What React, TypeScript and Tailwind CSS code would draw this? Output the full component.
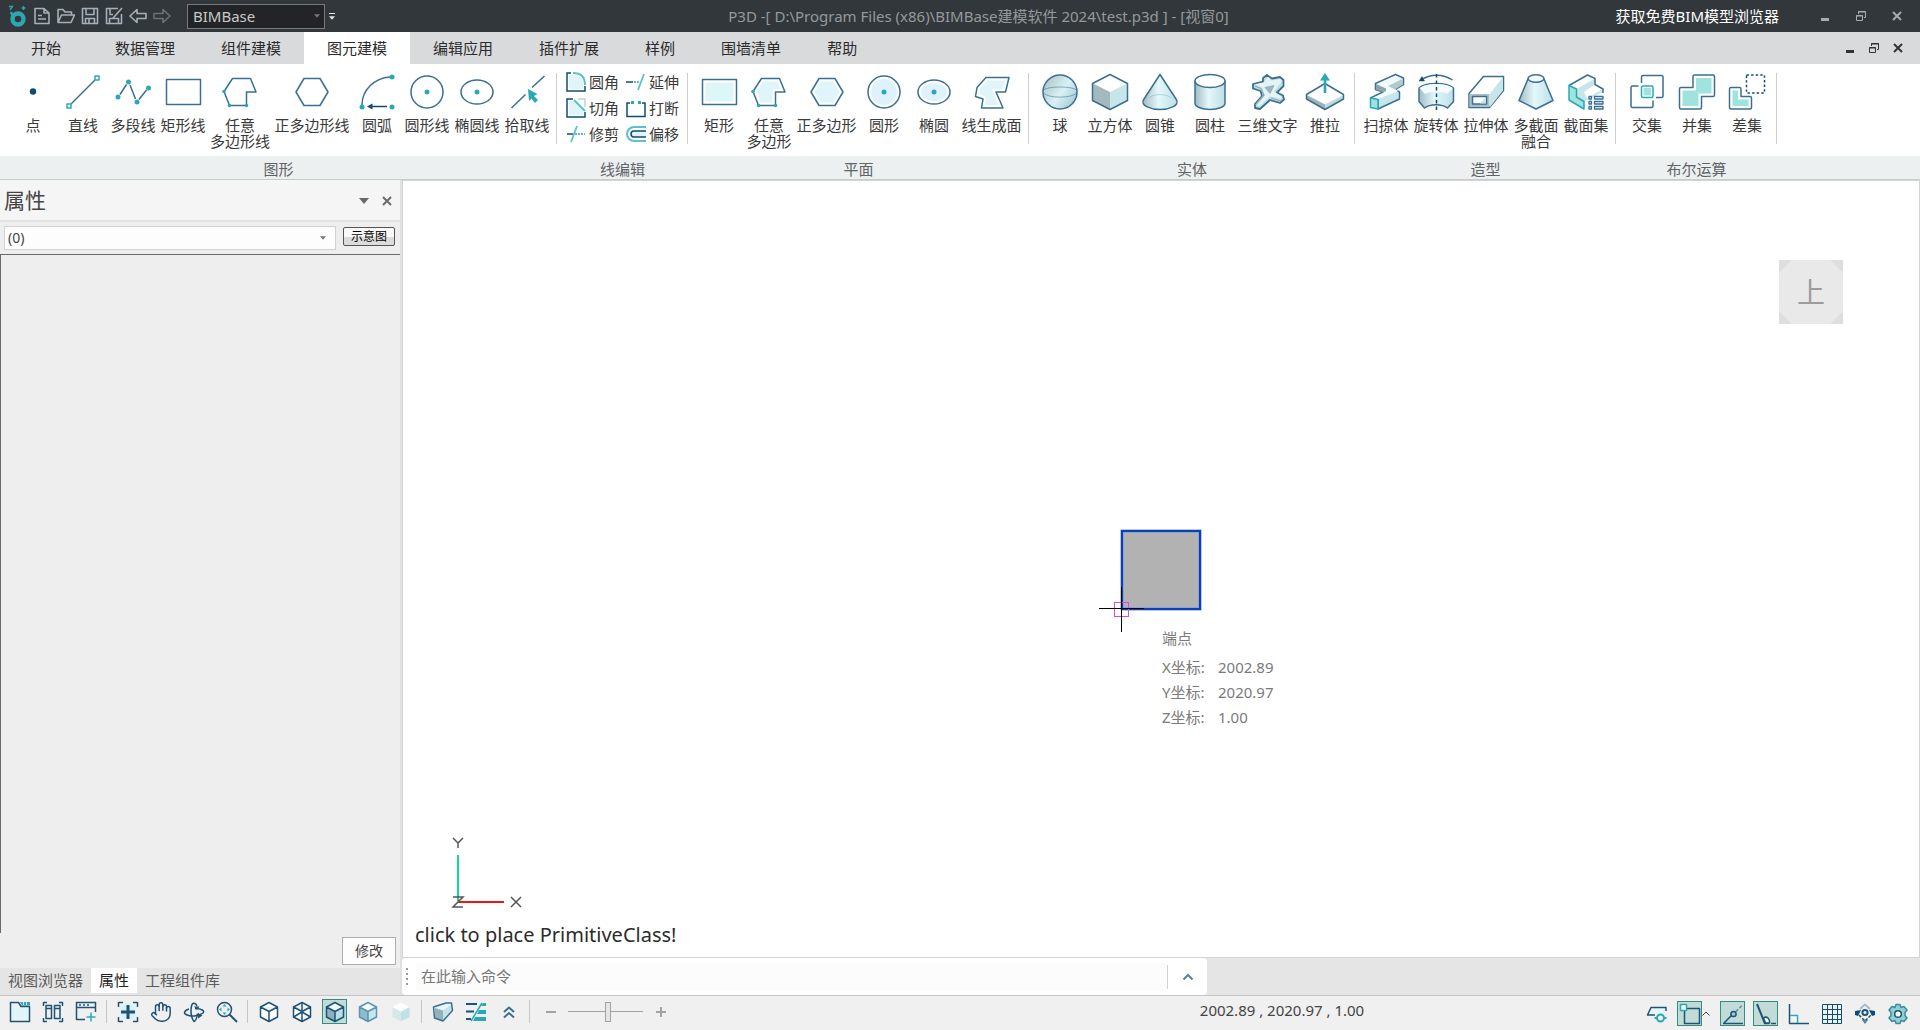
import { ReactNode } from "react";
import { Hand } from "lucide-react";

const NAVY = "#0f4c75";
const LINE = "#3a6f93";
const TEAL = "#2aa9b5";
const PALE = "#dff5fa";
const MINT = "#9fe3de";

/* ---------- icon wrappers ---------- */

const Big = ({ children }: { children: ReactNode }) => (
  <svg width="40" height="40" viewBox="0 0 40 40" fill="none" stroke={LINE} strokeWidth="1.5" strokeLinejoin="round" aria-hidden="true">
    <defs>
      <linearGradient id="round" x1="0" x2="1">
        <stop offset="0" stopColor="#a3bcc2" />
        <stop offset="0.45" stopColor="#e4f8fb" />
        <stop offset="1" stopColor="#bcdfe4" />
      </linearGradient>
      <linearGradient id="ball" x1="0" y1="0" x2="1" y2="0.7">
        <stop offset="0" stopColor="#a3bcc2" />
        <stop offset="0.6" stopColor="#d9f1f4" />
        <stop offset="1" stopColor="#a9cdd4" />
      </linearGradient>
    </defs>
    {children}
  </svg>
);

const Mini = ({ children }: { children: ReactNode }) => (
  <svg width="20" height="20" viewBox="0 0 20 20" fill="none" stroke={NAVY} strokeWidth="1.5" aria-hidden="true">
    {children}
  </svg>
);

const Bar = ({ children }: { children: ReactNode }) => (
  <svg width="22" height="22" viewBox="0 0 22 22" fill="none" stroke="#1d5377" strokeWidth="1.5" strokeLinejoin="round" className="shrink-0" aria-hidden="true">
    {children}
  </svg>
);

const Quick = ({ children, dim }: { children: ReactNode; dim?: boolean }) => (
  <svg width="18" height="18" viewBox="0 0 18 18" fill="none" stroke={dim ? "#67717a" : "#a5b0b8"} strokeWidth="1.6" strokeLinejoin="round" aria-hidden="true">
    {children}
  </svg>
);

const Dot = ({ x, y, r = 2.5, c = TEAL }: { x: number; y: number; r?: number; c?: string }) => (
  <circle cx={x} cy={y} r={r} fill={c} stroke="none" />
);

/* ---------- ribbon icons ---------- */

const freePoly = "M12.5 6.5H30.5L36 20H26.5V33.5H9.5L4 19.5Z";
const hexagon = "M4 20L12 6.5H28L36 20L28 33.5H12Z";

const icons: Record<string, ReactNode> = {
  point: <Dot x={20} y={19.5} r={3.2} c={NAVY} />,
  line: (
    <>
      <path d="M8 32L32 8" />
      <rect x="4" y="32" width="4" height="4" stroke={TEAL} />
      <rect x="32" y="4" width="4" height="4" stroke={TEAL} />
    </>
  ),
  polyline: (
    <>
      <path d="M7 22.5L13.5 12.5M17 13L22.5 27M26 27.5L33.5 18" />
      <Dot x={5} y={25} />
      <Dot x={15.5} y={10} />
      <Dot x={24} y={30} />
      <Dot x={35.5} y={16} />
    </>
  ),
  rectLine: <rect x="3.5" y="7.5" width="34" height="25" />,
  freeLine: (
    <>
      <path d={freePoly} />
      <Dot x={4} y={19.5} r={1.8} />
      <Dot x={9.5} y={33.5} r={1.8} />
      <Dot x={26.5} y={33.5} r={1.8} />
    </>
  ),
  hexLine: <path d={hexagon} />,
  arc: (
    <>
      <path d="M5 33A30 28 0 0 1 33 5" />
      <path d="M30 34.5H13" stroke={NAVY} />
      <path d="M10 34.5L15.5 31.5V37.5Z" fill={NAVY} stroke="none" />
      <Dot x={5} y={35} />
      <Dot x={35} y={5} />
      <Dot x={35} y={35} />
    </>
  ),
  circleLine: (
    <>
      <circle cx="20" cy="20" r="16" />
      <Dot x={20} y={20} />
    </>
  ),
  ellipseLine: (
    <>
      <ellipse cx="20" cy="20" rx="16" ry="12" />
      <Dot x={20} y={20} />
    </>
  ),
  pick: (
    <>
      <path d="M4.5 36L18.5 22.5M25 15.5L37.5 4" />
      <path d="M21 17L30.5 22L27 24L31 28L28 31L24.5 26.5L22 29Z" fill={TEAL} stroke="none" />
    </>
  ),
  rect: (
    <>
      <rect x="3.5" y="7.5" width="34" height="25" />
      <rect x="6.5" y="10.5" width="28" height="19" fill="#ddf7f9" stroke="none" />
    </>
  ),
  free: (
    <>
      <path d={freePoly} />
      <path d="M14 9.5H28.5L31.5 17H23.5V30.5H11.5L7.5 19.5Z" fill={PALE} stroke="none" />
      <Dot x={4} y={19.5} r={1.8} />
      <Dot x={9.5} y={33.5} r={1.8} />
      <Dot x={26.5} y={33.5} r={1.8} />
    </>
  ),
  hex: (
    <>
      <path d={hexagon} />
      <path d="M7.5 20L13.5 9.5H26.5L32.5 20L26.5 30.5H13.5Z" fill={PALE} stroke="none" />
    </>
  ),
  circle: (
    <>
      <circle cx="20" cy="20" r="16" />
      <circle cx="20" cy="20" r="13" fill="#dff1fb" stroke="none" />
      <Dot x={20} y={20} />
    </>
  ),
  ellipse: (
    <>
      <ellipse cx="20" cy="20" rx="16" ry="12" />
      <ellipse cx="20" cy="20" rx="13" ry="9" fill="#dff1fb" stroke="none" />
      <Dot x={20} y={20} />
    </>
  ),
  lineFace: (
    <>
      <path d="M14 5.5H37L33.5 20H24L31 36H9.5L11 27L3.5 24.5L5 15.5Z" />
      <path d="M15.5 8.5H33.5L31 17H19.5L26.5 33H13L14 25L7 22L8 16.5Z" fill={PALE} stroke="none" />
    </>
  ),
  sphere: (
    <>
      <circle cx="20" cy="20" r="17" fill="url(#ball)" />
      <path d="M3.5 18C8 14 32 14 36.5 18M3.5 21C8 26.5 32 26.5 36.5 21" strokeWidth="0.9" opacity="0.6" />
    </>
  ),
  cube: (
    <>
      <path d="M20 20L37 11.5V28.5L20 37.5Z" fill="#c7e6e9" stroke="none" />
      <path d="M20 20L3 11.5V28.5L20 37.5Z" fill="#a3b9be" stroke="none" />
      <path d="M20 2.5L37.5 11.5V28.5L20 37.5L2.5 28.5V11.5Z" />
    </>
  ),
  cone: (
    <>
      <path d="M20 2.5L4 27C-1 34 12 37.5 20 37.5S41 34 36 27Z" fill="url(#round)" />
      <path d="M9 26C13 21.5 27 21.5 31 26" strokeWidth="0.8" opacity="0.3" />
    </>
  ),
  cylinder: (
    <>
      <path d="M5 9V31C5 39.5 35 39.5 35 31V9Z" fill="url(#round)" />
      <ellipse cx="20" cy="9" rx="15" ry="6.5" fill="#fff" />
    </>
  ),
  text3d: (
    <>
      <path d="M15 6L19 3L24 6.5L32 5L35.5 8V14L29 20.5L35 23.5L36 27.5L32 31L22 28L12 37L7 36V32L14 24L12.5 19L5 16.5V12L15 9.5Z" fill="#c3dde2" strokeWidth="1.8" />
      <path d="M7 12.5L16 10.5L20 5L23.5 8.5L33 7L33.5 10L26 19.5L34 25L33 27L22 24.5L11 34.5L9 33L16.5 24L14.5 16Z" fill="#e3f3f6" stroke="none" />
      <path d="M7 14L13 16.5L16 23L9 31L7.5 33M23 26L33 29" stroke="#8fabb3" strokeWidth="1.2" />
      <path d="M17 15.5L26 13.5L22 21.5Z" fill="#9fb6bc" stroke="#8fabb3" strokeWidth="0.8" />
    </>
  ),
  push: (
    <>
      <path d="M1.5 23V27L20 37.5L38.5 27V23L20 32.5Z" fill="#bcd9de" stroke="none" />
      <path d="M1.5 23V27L20 37.5V32.5Z" fill="#9bb3b9" stroke="none" />
      <path d="M20 11.5L38.5 22.5V27L20 37.5L1.5 27V22.5Z" />
      <path d="M20 21V7" stroke={TEAL} strokeWidth="2.6" />
      <path d="M20 1L25 8.5H15Z" fill={TEAL} stroke="none" />
    </>
  ),
  sweep: (
    <>
      <path d="M9.5 11.5L29.5 2.5L37.5 6V12.5L29 17.5L33.5 20V27L12 37V27.5L4.5 26L17 20L9.5 17.5Z" fill="#c7e6e9" />
      <path d="M10.5 12L29.5 3.5L36 6.5L23.5 14L32.5 19L12 27L6.5 26L19 20L10.5 16Z" fill="#f2fbfc" stroke="none" />
      <path d="M10 12L20 16.5V19L17 20.5L10 17.5Z" fill="#8ca5ac" stroke="none" />
      <path d="M22 14L37 7V12.5L29 17.5Z" fill="#b3c8cd" stroke="none" />
      <path d="M4.5 26L12 27.5V37L4.5 35.5Z" fill={MINT} stroke={TEAL} />
    </>
  ),
  revolve: (
    <>
      <path d="M3 16C9 10 31 10 37.5 16V29.5L31.5 36C26 31.5 14 31.5 8.5 36L3 29.5Z" fill="url(#round)" />
      <path d="M3.5 16C10 10.5 30 10.5 37 16L31 22C26 18.5 14 18.5 9 22Z" fill="#f4fbfc" stroke="none" />
      <path d="M5 8C14 1.5 27 1.5 36.5 8" />
      <path d="M3 9L6 4.5L8.5 9Z" fill={NAVY} stroke={NAVY} strokeWidth="0.5" />
      <path d="M20.5 2V38" stroke={NAVY} strokeDasharray="3.5 3" />
    </>
  ),
  extrude: (
    <>
      <path d="M3 21.5L17.5 4.5H37.5V18.5L23.5 35.5H3Z" fill="#fff" />
      <path d="M24 21.5L37 5V18.5L24 35Z" fill="#c7e6e9" stroke="none" />
      <path d="M3.5 22H23.5V35H3.5Z" fill="#a9c0c5" stroke="none" />
      <rect x="6.5" y="24.5" width="14" height="7.5" fill="#fff" />
      <path d="M14 31.5L20 25V31.5Z" fill="#c7e6e9" stroke="none" />
    </>
  ),
  loft: (
    <>
      <path d="M12 7L3 28.5L20 37L37 28.5L28 7Z" fill="url(#round)" />
      <ellipse cx="20" cy="6.5" rx="8" ry="3.8" fill="#eefafb" />
    </>
  ),
  sections: (
    <>
      <path d="M3 13.5L21.5 3L29 6.5V12.5L37 17V23H22L18 37L3 28Z" fill="#fff" stroke="none" />
      <path d="M10.5 17L29 6.5V12.5L37 17V20L18 29.5L10.5 25Z" fill="#c7e6e9" stroke="none" />
      <path d="M18 20L29 12.5L37 17L21 26Z" fill="#fff" stroke="none" />
      <path d="M3 13.5L21.5 3L29 6.5V12.5L37 17V21" />
      <path d="M3 13.5L10.5 17V25L18 29.5V37L3 28Z" fill={MINT} stroke={TEAL} />
      <path d="M23 24.5h2.5v2.5h-2.5zM23 29.5h2.5v2.5h-2.5zM23 34.5h2.5v2.5h-2.5zM28.5 24.5h8.5v2.5h-8.5zM28.5 29.5h8.5v2.5h-8.5zM28.5 34.5h8.5v2.5h-8.5z" fill="#fff" strokeWidth="1.3" />
    </>
  ),
  intersect: (
    <>
      <path d="M14.5 11V5Q14.5 3.5 16 3.5H34.5Q36 3.5 36 5V24Q36 25.5 34.5 25.5H29" />
      <path d="M11.5 14H5.5Q4 14 4 15.5V34Q4 35.5 5.5 35.5H24.5Q26 35.5 26 34V28.5" />
      <rect x="14.5" y="14" width="11.5" height="11.5" rx="1.5" stroke={TEAL} />
      <rect x="16.5" y="16" width="7.5" height="7.5" fill={MINT} stroke="none" />
    </>
  ),
  union: (
    <>
      <path d="M17.5 3H36Q37.5 3 37.5 4.5V23Q37.5 24.5 36 24.5H24.5V35.5Q24.5 37 23 37H4Q2.5 37 2.5 35.5V17Q2.5 15.5 4 15.5H16V4.5Q16 3 17.5 3Z" />
      <path d="M19 6H34.5V21.5H21.5V34H5.5V18.5H19Z" fill={MINT} stroke="none" />
    </>
  ),
  subtract: (
    <>
      <path d="M4 15.5H12.5Q14 15.5 14 17V24.5H23Q24.5 24.5 24.5 26V35.5Q24.5 37 23 37H4Q2.5 37 2.5 35.5V17Q2.5 15.5 4 15.5Z" />
      <path d="M5.5 18.5H11V27.5H21.5V34H5.5Z" fill={MINT} stroke="none" />
      <rect x="19.5" y="3" width="18" height="18" strokeDasharray="2.4 2.2" stroke={NAVY} />
    </>
  ),
};

type Tool = { icon: string; label: string; wide?: string };

const shapeTools: Tool[] = [
  { icon: "point", label: "点" },
  { icon: "line", label: "直线" },
  { icon: "polyline", label: "多段线" },
  { icon: "rectLine", label: "矩形线" },
  { icon: "freeLine", label: "任意\n多边形线", wide: "w-16" },
  { icon: "hexLine", label: "正多边形线", wide: "w-20" },
  { icon: "arc", label: "圆弧" },
  { icon: "circleLine", label: "圆形线" },
  { icon: "ellipseLine", label: "椭圆线" },
  { icon: "pick", label: "拾取线" },
];

const planeTools: Tool[] = [
  { icon: "rect", label: "矩形" },
  { icon: "free", label: "任意\n多边形" },
  { icon: "hex", label: "正多边形", wide: "w-[65px]" },
  { icon: "circle", label: "圆形" },
  { icon: "ellipse", label: "椭圆" },
  { icon: "lineFace", label: "线生成面", wide: "w-[65px]" },
];

const solidTools: Tool[] = [
  { icon: "sphere", label: "球" },
  { icon: "cube", label: "立方体" },
  { icon: "cone", label: "圆锥" },
  { icon: "cylinder", label: "圆柱" },
  { icon: "text3d", label: "三维文字", wide: "w-[65px]" },
  { icon: "push", label: "推拉" },
];

const formTools: Tool[] = [
  { icon: "sweep", label: "扫掠体" },
  { icon: "revolve", label: "旋转体" },
  { icon: "extrude", label: "拉伸体" },
  { icon: "loft", label: "多截面\n融合" },
  { icon: "sections", label: "截面集" },
];

const boolTools: Tool[] = [
  { icon: "intersect", label: "交集" },
  { icon: "union", label: "并集" },
  { icon: "subtract", label: "差集" },
];

const editTools: { label: string; icon: ReactNode }[] = [
  {
    label: "圆角",
    icon: (
      <>
        <path d="M3 3H9Q17 4 17 11V17H3Z" fill={PALE} stroke="none" />
        <path d="M5 1H1V19H19V14" />
        <path d="M7 1Q19 1 19 13" stroke="#5fc0c8" strokeWidth="2" />
      </>
    ),
  },
  {
    label: "延伸",
    icon: (
      <>
        <path d="M0 10H7" />
        <path d="M8 10H14" stroke={TEAL} strokeDasharray="2 1" />
        <path d="M18 2L12 18" stroke="#5fc0c8" strokeWidth="1.8" />
      </>
    ),
  },
  {
    label: "切角",
    icon: (
      <>
        <path d="M3 3H8L17 12V17H3Z" fill={PALE} stroke="none" />
        <path d="M12 1H19V9" stroke="#c3cfdd" />
        <path d="M7 1H1V19H19V14" />
        <path d="M8 2L19 13" stroke="#5fc0c8" strokeWidth="2" />
      </>
    ),
  },
  {
    label: "打断",
    icon: (
      <>
        <path d="M4 5H1V18.5H19V5H16" />
        <path d="M5 3h3v3h-3zM12 3h3v3h-3z" fill={TEAL} stroke="none" />
      </>
    ),
  },
  {
    label: "修剪",
    icon: (
      <>
        <path d="M1 10H7" />
        <path d="M9 10H19" stroke={TEAL} strokeDasharray="2 1" />
        <path d="M11 2L5 18" stroke="#5fc0c8" strokeWidth="1.8" />
      </>
    ),
  },
  {
    label: "偏移",
    icon: (
      <>
        <path d="M20 3H8A7 7 0 0 0 8 17H20" stroke="#5fc0c8" strokeWidth="2" />
        <path d="M20 7H8A3 3 0 0 0 8 13H20" fill={PALE} />
      </>
    ),
  },
];

const ToolButton = ({ icon, label, wide = "w-[50px]" }: Tool) => (
  <button className={`${wide} flex flex-col items-center hover:bg-[#e8f4f5]`}>
    <Big>{icons[icon]}</Big>
    <span className="mt-[5px] text-[15px] leading-4 whitespace-pre">{label}</span>
  </button>
);

const Group = ({ title, pad, children }: { title: string; pad: string; children: ReactNode }) => (
  <section className="flex flex-col shrink-0">
    <div className="h-[92px] flex">
      <div className={`flex items-start pt-2 ${pad}`}>{children}</div>
      <div className="w-px h-[71px] mt-[9px] bg-[#cfcfcf]" />
    </div>
    <h2 className="h-[23px] leading-[26px] text-[15px] text-center text-[#5f6366]">{title}</h2>
  </section>
);

/* ---------- window chrome ---------- */

const Minimize = () => (
  <svg width="12" height="12" viewBox="0 0 12 12" aria-hidden="true">
    <path d="M2 8h8v3H2z" fill="currentColor" />
  </svg>
);

const Restore = () => (
  <svg width="12" height="12" viewBox="0 0 12 12" fill="none" stroke="currentColor" aria-hidden="true">
    <path d="M3.5 4V1.5H10.5V7.5H9M3 2H11" />
    <path d="M1.5 5.5H7.5V10.5H1.5ZM1 6H8" />
  </svg>
);

const Close = () => (
  <svg width="12" height="12" viewBox="0 0 12 12" fill="none" stroke="currentColor" strokeWidth="2" aria-hidden="true">
    <path d="M2 2L10 10M10 2L2 10" />
  </svg>
);

const Triangle = ({ className }: { className: string }) => (
  <svg className={className} viewBox="0 0 10 6" fill="currentColor" aria-hidden="true">
    <path d="M0 0H10L5 6Z" />
  </svg>
);

const quickActions: { name: string; icon: ReactNode; dim?: boolean }[] = [
  { name: "新建", icon: <path d="M2 1.5H11L16 6V16.5H2ZM11 1.5V6H16M5 8.5H9M5 12H13" /> },
  { name: "打开", icon: <path d="M1 15.5V2.5H6L8 5H14.5V8M1 15.5L4.5 8H17.5L14 15.5Z" /> },
  { name: "保存", icon: <path d="M1.5 1.5H16.5V16.5H1.5ZM5 1.5V7.5H13V1.5M4.5 16.5V11.5H13.5V16.5M8 11.5V16.5" /> },
  { name: "另存为", icon: <path d="M13 1.5H1.5V16.5H16.5V7M5 1.5V7.5H8M4.5 16.5V11.5H13.5V16.5M17 1L9.5 9.5L8 11" /> },
  { name: "撤销", icon: <path d="M1 9L8 2.5V6.5H17V11.5H8V15.5Z" /> },
  { name: "重做", icon: <path d="M17 9L10 2.5V6.5H1V11.5H10V15.5Z" />, dim: true },
];

const TitleBar = () => (
  <header className="h-8 shrink-0 flex items-center bg-[#32373b] text-[15px]">
    <div className="w-[340px] shrink-0 flex items-center pl-2">
      <svg width="18" height="22" viewBox="0 0 18 22" fill="none" aria-hidden="true">
        <circle cx="10" cy="14" r="5.5" stroke={TEAL} strokeWidth="4.4" />
        <path d="M3 7L5 12" stroke={TEAL} strokeWidth="2.5" />
        <path d="M1 1.5H4.5L2 5M15.5 1V5M13.5 3H17.5" stroke={TEAL} strokeWidth="1.3" />
      </svg>
      <div className="flex ml-1">
        {quickActions.map((a) => (
          <button key={a.name} aria-label={a.name} className="w-6 h-6 flex items-center justify-center">
            <Quick dim={a.dim}>{a.icon}</Quick>
          </button>
        ))}
      </div>
      <div className="relative ml-[13px]">
        <select aria-label="工作空间" className="appearance-none block w-[138px] h-[25px] pl-[5px] bg-[#222427] border border-[#77797b] text-[#c9c9c9] leading-5">
          <option>BIMBase</option>
        </select>
        <Triangle className="absolute right-[5px] top-2.5 w-1.5 h-1 text-[#76797b] pointer-events-none" />
      </div>
      <button aria-label="自定义快速访问" className="ml-1 flex flex-col items-center gap-0.5 text-[#e6e6e6]">
        <span className="w-1.5 h-px bg-current" />
        <Triangle className="w-1.5 h-1" />
      </button>
    </div>
    <h1 className="flex-1 text-center text-[#96999b] whitespace-nowrap">
      P3D -[ D:\Program Files (x86)\BIMBase建模软件 2024\test.p3d ] - [视窗0]
    </h1>
    <div className="w-[303px] shrink-0 flex items-center justify-end text-[#a9abac]">
      <a href="#browser" className="mr-10 text-white whitespace-nowrap">获取免费BIM模型浏览器</a>
      <div className="flex gap-6 pr-[17px]">
        <button aria-label="最小化"><Minimize /></button>
        <button aria-label="还原"><Restore /></button>
        <button aria-label="关闭"><Close /></button>
      </div>
    </div>
  </header>
);

const tabs = ["数据管理", "组件建模", "图元建模", "编辑应用", "插件扩展", "样例", "围墙清单", "帮助"];

const TabBar = () => (
  <nav className="h-8 shrink-0 flex items-stretch bg-[#d9dadc] text-[15px] text-[#2b2b2b]">
    <button className="px-[31px]">开始</button>
    {tabs.map((t) => (
      <button key={t} className={`px-[23px] ${t === "图元建模" ? "bg-white" : ""}`}>{t}</button>
    ))}
    <div className="ml-auto flex items-center gap-3 pr-4 pb-px text-[#333]">
      <button aria-label="最小化窗口"><Minimize /></button>
      <button aria-label="还原窗口"><Restore /></button>
      <button aria-label="关闭窗口"><Close /></button>
    </div>
  </nav>
);

const Ribbon = () => (
  <div className="shrink-0 border-b border-[#c9cbcc] bg-[linear-gradient(#fff_92px,#ecf0f1_92px)] flex text-[#3a3a3a]">
    <Group title="图形" pad="pl-2 pr-1">
      {shapeTools.map((t) => <ToolButton key={t.icon} {...t} />)}
    </Group>
    <Group title="线编辑" pad="pl-[9px] pr-px">
      <div className="grid grid-cols-[60px_60px]">
        {editTools.map((t) => (
          <button key={t.label} className="h-[26px] flex items-start gap-[3px] text-[15px] leading-5">
            <Mini>{t.icon}</Mini>
            {t.label}
          </button>
        ))}
      </div>
    </Group>
    <Group title="平面" pad="pl-1.5 pr-1">
      {planeTools.map((t) => <ToolButton key={t.icon} {...t} />)}
    </Group>
    <Group title="实体" pad="pl-1.5 pr-1">
      {solidTools.map((t) => <ToolButton key={t.icon} {...t} />)}
    </Group>
    <Group title="造型" pad="pl-1.5 pr-1">
      {formTools.map((t) => <ToolButton key={t.icon} {...t} />)}
    </Group>
    <Group title="布尔运算" pad="pl-1.5 pr-1">
      {boolTools.map((t) => <ToolButton key={t.icon} {...t} />)}
    </Group>
  </div>
);

/* ---------- properties panel ---------- */

const PropertyPanel = () => (
  <aside className="w-[400px] shrink-0 flex flex-col bg-[#eee]">
    <div className="h-10 shrink-0 flex items-center pt-0.5 pl-1 pr-[7px] bg-[#f5f5f5] text-[#6a6a6a]">
      <h2 className="flex-1 text-[21px] text-[#444]">属性</h2>
      <button aria-label="面板菜单" className="mr-3"><Triangle className="w-2.5 h-1.5" /></button>
      <button aria-label="关闭面板"><Close /></button>
    </div>
    <div className="shrink-0 h-[34px] pt-1 border-t-2 border-[#e3e3e3] flex items-start pl-1 pr-[5px] gap-[7px]">
      <div className="relative flex-1">
        <select aria-label="选择对象" className="appearance-none w-full h-6 block pl-[3px] bg-[#fdfdfd] border border-[#d2d2d2] text-[14px] leading-5 text-[#444]">
          <option>(0)</option>
        </select>
        <Triangle className="absolute right-2.5 top-2.5 w-1.5 h-1 text-[#777] pointer-events-none" />
      </div>
      <button className="w-[52px] h-[19px] mt-px border border-[#555] rounded-[2px] bg-[linear-gradient(#fafafa_50%,#dcdcdc_50%)] text-[12px] leading-4 text-black">
        示意图
      </button>
    </div>
    <div className="flex-1 border-t border-l border-[#6a6a6a]" />
    <div className="shrink-0 flex justify-end pt-1 pb-[3px] pr-1">
      <button className="w-[54px] h-7 pb-0.5 bg-[#fdfdfd] border border-[#adadad] text-[14px] text-[#444]">修改</button>
    </div>
    <div className="h-[27px] shrink-0 bg-[#e5e5e5] flex items-start text-[15px] text-[#5c5c5c]">
      <button className="h-[25px] px-2">视图浏览器</button>
      <button className="h-[25px] px-2 bg-white text-[#222]">属性</button>
      <button className="h-[25px] px-2">工程组件库</button>
    </div>
  </aside>
);

/* ---------- viewport ---------- */

const coords = [
  ["X坐标:", "2002.89"],
  ["Y坐标:", "2020.97"],
  ["Z坐标:", "1.00"],
];

const Viewport = () => (
  <main className="relative flex-1 min-h-0 bg-white border border-[#d4d4d4] overflow-hidden">
    <svg className="absolute left-[695px] top-[347px]" width="106" height="106" fill="none" aria-hidden="true">
      <rect x="24" y="3" width="78" height="78" fill="#b2b2b2" stroke="#6f93d8" strokeWidth="3" />
      <rect x="24" y="3" width="78" height="78" stroke="#0a3fb9" strokeWidth="2" />
      <rect x="16.5" y="74.5" width="14" height="14" stroke="#d94bd9" />
      <path d="M1 80.5H46M23.5 59V104" stroke="#000" />
    </svg>
    <div className="absolute left-[759px] top-[445px] text-[15px] leading-[25px] text-[#7a7a7a]">
      <p className="mb-1">端点</p>
      <dl className="grid grid-cols-[56px_auto]">
        {coords.map(([k, v]) => (
          <div key={k} className="contents">
            <dt>{k}</dt>
            <dd>{v}</dd>
          </div>
        ))}
      </dl>
    </div>
    <button aria-label="顶视图" className="absolute right-[76px] top-[79px] w-16 h-16 bg-[#dedede]">
      <span className="flex items-center justify-center w-16 h-16 bg-[#e9e9e9] text-[28px] text-[#9c9c9c] [clip-path:polygon(20%_0,80%_0,100%_20%,100%_80%,80%_100%,20%_100%,0_80%,0_20%)]">
        上
      </span>
    </button>
    <svg className="absolute left-[42px] bottom-[44px]" width="84" height="80" aria-hidden="true">
      <path d="M13 22V68" stroke="#12d6a0" strokeWidth="2" />
      <path d="M13 69H59" stroke="#f51414" strokeWidth="2" />
      <g fill="none" stroke="#555" strokeWidth="1.5">
        <path d="M8 5L13 10L18 5M13 10V15" />
        <path d="M66 64L76 74M76 64L66 74" />
        <path d="M8 64H18L8 74H18" />
      </g>
    </svg>
    <p className="absolute left-3 bottom-2 text-[20px] leading-7 text-[#2c2c2c]">click to place PrimitiveClass!</p>
  </main>
);

const CommandLine = () => (
  <div className="h-[37px] shrink-0 flex bg-[#e5e5e5]">
    <div className="w-[805px] h-full flex items-center bg-white rounded pl-1">
      <svg width="2" height="18" fill="#999" aria-hidden="true">
        <path d="M0 0h2v2H0zM0 5h2v2H0zM0 10h2v2H0zM0 15h2v2H0z" />
      </svg>
      <input aria-label="命令" placeholder="在此输入命令" className="flex-1 h-7 ml-2 pl-[5px] pb-0.5 bg-[#fcfcfc] text-[15px] outline-none placeholder:text-[#777]" />
      <div className="w-px h-6 bg-[#d0d0d0]" />
      <button aria-label="展开命令历史" className="w-[39px] h-full flex items-center justify-center">
        <svg width="12" height="8" viewBox="0 0 12 8" fill="none" stroke="#5580a0" strokeWidth="2" aria-hidden="true">
          <path d="M1.5 6.5L6 2L10.5 6.5" />
        </svg>
      </button>
    </div>
  </div>
);

/* ---------- status bar ---------- */

const cubeEdges = "M11 1.5L19.5 6V16L11 20.5L2.5 16V6ZM2.5 6L11 10.5L19.5 6M11 10.5V20.5";

const ShadedCube = ({ top, left, right, edge }: { top: string; left: string; right: string; edge?: string }) => (
  <Bar>
    <path d="M11 10.5L19.5 6V16L11 20.5Z" fill={right} stroke="none" />
    <path d="M11 10.5L2.5 6V16L11 20.5Z" fill={left} stroke="none" />
    <path d="M11 1.5L19.5 6L11 10.5L2.5 6Z" fill={top} stroke="none" />
    {edge && <path d={cubeEdges} stroke={edge} />}
  </Bar>
);

type Status = { name: string; icon: ReactNode; on?: boolean };

const leftGroups: Status[][] = [
  [
    {
      name: "新视窗",
      icon: (
        <Bar>
          <path d="M3 7H19V18H3Z" fill={PALE} stroke="none" />
          <path d="M11 1H21V4.5H13Z" fill={TEAL} stroke="none" />
          <path d="M14.5 1V4M17.5 1V4" stroke="#d8eef0" strokeWidth="1" />
          <path d="M1.5 1.5H9.5L12 5.5H20.5V20.5H1.5Z" />
        </Bar>
      ),
    },
    {
      name: "平铺视窗",
      icon: (
        <Bar>
          <path d="M5 1.5H1.5V5M17 1.5H20.5V5M5 20.5H1.5V17M17 20.5H20.5V17" />
          <path d="M4 4.5H9.5V17.5H4ZM12.5 4.5H18V17.5H12.5ZM4 7.5H9.5M12.5 7.5H18" />
        </Bar>
      ),
    },
    {
      name: "层叠视窗",
      icon: (
        <Bar>
          <path d="M10 18.5H1.5V1.5H20.5V11M1.5 6.5H20.5" />
          <path d="M4 4H6M8 4H10M12 4H14" strokeWidth="1.6" />
          <path d="M16 11.5V20.5M11.5 16H20.5" stroke={TEAL} />
        </Bar>
      ),
    },
  ],
  [
    {
      name: "全图",
      icon: (
        <Bar>
          <circle cx="11" cy="11" r="8" fill="#d8f1f4" stroke="none" />
          <path d="M6 1.5H1.5V6M16 1.5H20.5V6M6 20.5H1.5V16M16 20.5H20.5V16" />
          <path d="M11 4V18M4 11H18" strokeWidth="3" />
        </Bar>
      ),
    },
    { name: "平移", icon: <Hand size={22} strokeWidth={1.6} color="#1d5377" className="shrink-0" /> },
    {
      name: "旋转",
      icon: (
        <Bar>
          <path d="M14 5C13 2 9.5 0.5 8.5 5C7.5 10 8 17 11 20.5C13 20 14 16 14.5 12.5" />
          <path d="M6 8C1 9.5 0 12.5 4 14C9 16 17 14.5 20 12C22 10 19 7.5 12 7.5" />
          <path d="M11 5.5H16.5L14 9Z" fill="#1d5377" stroke="none" />
          <path d="M15 12L19.5 14.5L15 17.5Z" fill="#1d5377" stroke="none" />
        </Bar>
      ),
    },
    {
      name: "缩放",
      icon: (
        <Bar>
          <circle cx="8.5" cy="8.5" r="7" />
          <path d="M13.5 13.5L21 21" strokeWidth="2" />
          <path d="M8.5 3L10.5 5.5H6.5ZM8.5 14L10.5 11.5H6.5ZM3 8.5L5.5 6.5V10.5ZM14 8.5L11.5 6.5V10.5Z" fill={TEAL} stroke="none" />
        </Bar>
      ),
    },
  ],
  [
    { name: "线框", icon: <Bar><path d={cubeEdges} fill="#fff" /></Bar> },
    { name: "透明线框", icon: <Bar><path d={cubeEdges} fill="#fff" /><path d="M2.5 16L11 11L19.5 16M11 1.5V11" /></Bar> },
    { name: "着色线框", on: true, icon: <ShadedCube top="#eef9fa" left="#8fb0b8" right="#b8dfe3" edge="#1d5377" /> },
    { name: "着色轮廓", icon: <ShadedCube top="#f3fbfc" left="#8fbccb" right="#c3e8ec" edge="#5d93b3" /> },
    { name: "着色", icon: <ShadedCube top="#fbfefe" left="#d6e8ea" right="#bfe0e4" /> },
  ],
  [
    {
      name: "剖切",
      icon: (
        <Bar>
          <path d="M2 6L14 2H20L20.5 9L11 20L3 17Z" fill="#e6f6f8" stroke="none" />
          <path d="M3 7L11 9.5V19.5L3 17Z" fill="#93b1ba" stroke="none" />
          <path d="M11 9.5L20 3V9.5L11 19.5Z" fill="#c3e3e7" stroke="none" />
          <path d="M1.5 6L14 2H19.5L20.5 9.5L11 20L2.5 17Z" stroke={LINE} />
        </Bar>
      ),
    },
    {
      name: "线宽",
      icon: (
        <Bar>
          <path d="M1 3H12M1 10.5H9M1 18H6" strokeWidth="2" />
          <path d="M17 2L6 20" stroke={TEAL} />
          <path d="M18 2H21V5H16ZM14 9H21V13H12ZM10 16H21V20H8Z" fill={TEAL} stroke="none" />
        </Bar>
      ),
    },
    { name: "更多", icon: <Bar><path d="M6 11L11 6.5L16 11M6 16.5L11 12L16 16.5" stroke="#3d6f92" strokeWidth="2" /></Bar> },
  ],
];

const rightTools: Status[] = [
  {
    name: "工作平面",
    icon: (
      <Bar>
        <path d="M6 4.5H20L17 11.5H2Z" fill="#e4f6f8" stroke="none" />
        <path d="M20 8V4.5H5L1.5 12H9" />
        <circle cx="14.5" cy="15" r="3.5" fill="#f0f0f0" stroke={TEAL} strokeWidth="2" />
        <path d="M8.5 15H11M18 15H20.5" stroke={TEAL} strokeWidth="2" />
      </Bar>
    ),
  },
  {
    name: "对象捕捉",
    on: true,
    icon: (
      <Bar>
        <path d="M8 5.5H20.5V20.5H5.5V8" />
        <rect x="1.5" y="1.5" width="6" height="6" fill="#fff" stroke={TEAL} />
      </Bar>
    ),
  },
  {
    name: "极轴追踪",
    on: true,
    icon: (
      <Bar>
        <path d="M14 8.5L21 1.5" strokeDasharray="3 2" opacity="0.6" />
        <path d="M2 20L9.5 12.5M1 20.5H21" />
        <circle cx="11.5" cy="11" r="2.6" fill="#9ccbd2" />
      </Bar>
    ),
  },
  {
    name: "角度捕捉",
    on: true,
    icon: (
      <Bar>
        <path d="M2 1L10 20.5" strokeWidth="2" />
        <path d="M9 20.5H14M16 20.5H21" />
        <path d="M8.5 15C12 12.5 15 16 14.5 20H10.5Z" fill="#fff" />
      </Bar>
    ),
  },
  {
    name: "正交",
    icon: (
      <Bar>
        <path d="M1.5 1V20.5H21" />
        <path d="M2 12.5H9.5V20" fill="#fff" stroke={TEAL} />
      </Bar>
    ),
  },
  {
    name: "栅格",
    icon: (
      <Bar>
        <path d="M1.5 1.5H20.5V20.5H1.5ZM6.5 1.5V20.5M11.5 1.5V20.5M16.5 1.5V20.5M1.5 6.5H20.5M1.5 11.5H20.5M1.5 16.5H20.5" stroke={NAVY} strokeWidth="1" />
      </Bar>
    ),
  },
  {
    name: "坐标系",
    icon: (
      <Bar>
        <path d="M6 6L11 1.5L16 6" stroke="#a8bccb" strokeWidth="2" />
        <path d="M1 8L7 7L4 13L1 12ZM21 8L15 7L18 13L21 12Z" fill={NAVY} stroke="none" />
        <path d="M5 12L11 18L17 12" strokeDasharray="3 1.5" />
        <circle cx="11" cy="9.5" r="2.6" strokeWidth="2" />
        <path d="M8 17H14L11 21Z" fill="#4f86a0" stroke="none" />
      </Bar>
    ),
  },
  {
    name: "设置",
    icon: (
      <Bar>
        <path d="M9 1.5H13L14 4.5L17 3.5L20 7L18 9.5V12.5L20 15L17 18.5L14 17.5L13 20.5H9L8 17.5L5 18.5L2 15L4 12.5V9.5L2 7L5 3.5L8 4.5Z" fill="#8fd0d4" stroke="#3e8ba0" />
        <circle cx="11" cy="11" r="3.3" fill="#fff" />
      </Bar>
    ),
  },
];

const StatusButton = ({ name, icon, on }: Status) => (
  <button
    aria-label={name}
    aria-pressed={!!on}
    className={`w-[25px] h-[25px] mx-1 shrink-0 flex items-center justify-center border ${on ? "bg-[#c1dcd7] border-[#2f8f80]" : "border-transparent"}`}
  >
    {icon}
  </button>
);

const Divider = () => <div className="w-px h-[23px] mx-1 bg-[#c6c6c6]" />;

const StatusBar = () => (
  <footer className="h-[35px] shrink-0 border-t border-[#c6c6c6] bg-[#f0f0f0] flex items-start pt-[3px] pl-[3px]">
    {leftGroups.map((group, i) => (
      <div key={i} className="flex items-center">
        {group.map((s) => <StatusButton key={s.name} {...s} />)}
        <Divider />
      </div>
    ))}
    <div className="h-[25px] flex items-center text-[#a3a3a3]">
      <button aria-label="缩小" className="ml-3 w-2.5 h-5 flex items-center">
        <span className="w-2.5 h-0.5 bg-current" />
      </button>
      <input
        type="range"
        aria-label="显示比例"
        defaultValue={54}
        className="appearance-none ml-3 w-[75px] h-5 bg-[linear-gradient(#a3a3a3,#a3a3a3)] bg-[length:100%_1px] bg-no-repeat bg-center [&::-webkit-slider-thumb]:appearance-none [&::-webkit-slider-thumb]:w-1.5 [&::-webkit-slider-thumb]:h-5 [&::-webkit-slider-thumb]:bg-[#e6e6e6] [&::-webkit-slider-thumb]:border [&::-webkit-slider-thumb]:border-[#a3a3a3]"
      />
      <button aria-label="放大" className="ml-[13px] w-2.5 h-5 flex items-center">
        <svg width="10" height="10" stroke="currentColor" strokeWidth="2" aria-hidden="true">
          <path d="M5 0V10M0 5H10" />
        </svg>
      </button>
    </div>
    <output className="mx-auto pl-[258px] text-[15px] leading-[22px] text-[#444] whitespace-nowrap">2002.89 , 2020.97 , 1.00</output>
    <div className="flex items-center pt-0.5 pr-1.5">
      {rightTools.map((s, i) => (
        <div key={s.name} className="flex items-center">
          <StatusButton {...s} />
          {i === 1 && (
            <button aria-label="捕捉选项" className="w-2.5 h-5 flex items-center">
              <svg width="8" height="5" fill="none" stroke="#444" className="-ml-1" aria-hidden="true">
                <path d="M0.5 4.5L4 1L7.5 4.5" />
              </svg>
            </button>
          )}
        </div>
      ))}
    </div>
  </footer>
);

const App = () => {
  return (
    <div className="h-screen flex flex-col overflow-hidden bg-[#e0e0e0] font-['Noto_Sans','Noto_Sans_CJK_SC',sans-serif]">
      <TitleBar />
      <TabBar />
      <Ribbon />
      <div className="flex-1 min-h-0 flex gap-0.5">
        <PropertyPanel />
        <div className="flex-1 min-w-0 flex flex-col">
          <Viewport />
          <CommandLine />
        </div>
      </div>
      <StatusBar />
    </div>
  );
};

export default App;
